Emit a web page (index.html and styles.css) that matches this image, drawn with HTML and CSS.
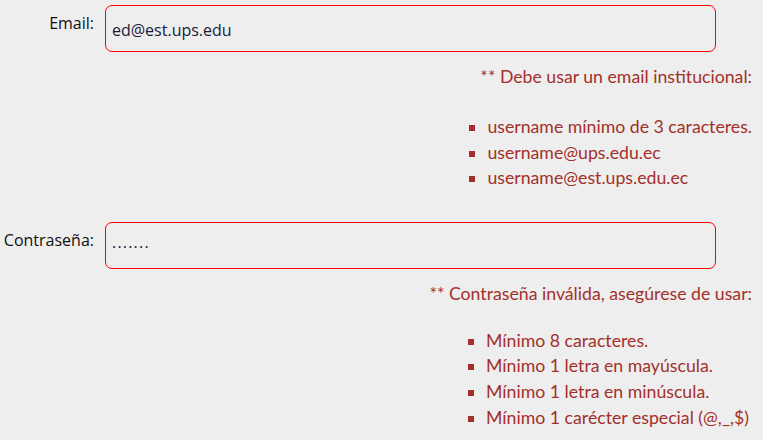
FILE: index.html
```html
<!DOCTYPE html>
<html>
<head>
<meta charset="utf-8">
<link rel="stylesheet" href="styles.css">
</head>
<body>
<form class="form">
  <div class="field">
    <label class="label">Email:</label>
    <div class="input">ed@est.ups.edu</div>
  </div>
  <div class="error">
    <p class="error-title">** Debe usar un email institucional:</p>
    <ul class="error-list list-email">
      <li>username mínimo de 3 caracteres.</li>
      <li>username@ups.edu.ec</li>
      <li>username@est.ups.edu.ec</li>
    </ul>
  </div>
  <div class="field field-pass">
    <label class="label">Contraseña:</label>
    <div class="input input-pass"><span class="dots">.......</span></div>
  </div>
  <div class="error">
    <p class="error-title">** Contraseña inválida, asegúrese de usar:</p>
    <ul class="error-list list-pass">
      <li>Mínimo 8 caracteres.</li>
      <li>Mínimo 1 letra en mayúscula.</li>
      <li>Mínimo 1 letra en minúscula.</li>
      <li>Mínimo 1 carécter especial (@,_,$)</li>
    </ul>
  </div>
</form>
</body>
</html>
```
FILE: styles.css
```css
html, body {
  margin: 0;
  padding: 0;
  background: #eeeeee;
}
.form {
  width: 763px;
  padding-top: 5px;
}
.field {
  display: flex;
  align-items: flex-start;
}
.label {
  width: 95px;
  box-sizing: border-box;
  text-align: right;
  padding-right: 1px;
  padding-top: 7px;
  font-family: "Open Sans", sans-serif;
  font-size: 16px;
  color: #111111;
}
.input {
  margin-left: 10px;
  width: 611px;
  height: 47px;
  box-sizing: border-box;
  border: 1px solid #ff0000;
  border-radius: 7px;
  padding: 13px 0 0 6px;
  font-family: "Open Sans", sans-serif;
  font-size: 16px;
  color: #1a1a3a;
}
.input-pass {
  padding-top: 8px;
}
.dots {
  letter-spacing: 1.2px;
}
.field-pass {
  margin-top: 31px;
}
.error {
  text-align: right;
  padding-right: 11px;
  font-family: Lato, sans-serif;
  font-size: 17.7px;
  color: #a3302a;
}
.error-title {
  margin: 14px 0 0 0;
  line-height: 22px;
}
.error-list {
  display: inline-block;
  text-align: left;
  margin: 26px 0 0 0;
  padding-left: 20px;
  list-style: square;
  line-height: 25.6px;
}
.list-pass {
  margin-top: 23px;
  padding-right: 3px;
}
```
